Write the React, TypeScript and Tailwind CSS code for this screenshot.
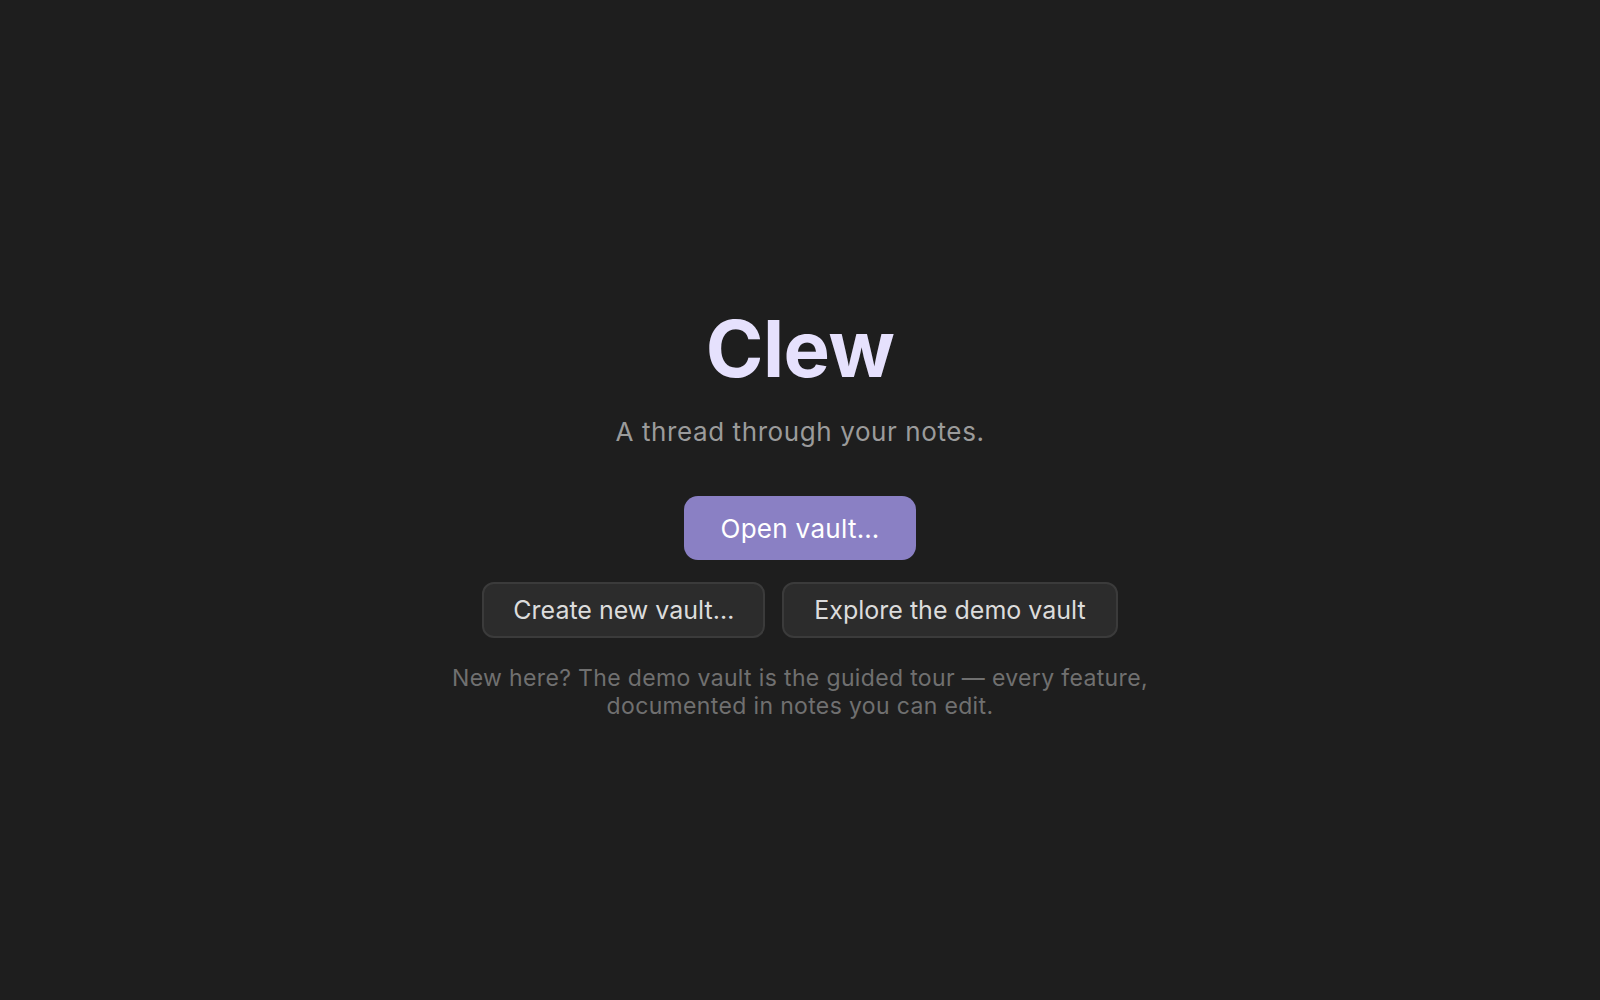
import React from 'react';

export default function App() {
  return (
    <div
      className="min-h-screen w-full bg-[#1e1e1e] flex flex-col items-center pt-[310px]"
      style={{ fontFamily: 'Inter, "Noto Sans", sans-serif' }}
    >
      {/* Title */}
      <h1 className="text-[78px] leading-none font-bold text-[#e6e1fd] tracking-[-0.5px]">Clew</h1>
      <p className="mt-[28px] text-[26px] leading-[32px] tracking-[0.6px] text-[#9b9b9b]">A thread through your notes.</p>

      {/* Actions */}
      <button className="mt-[48px] h-[64px] px-[36px] rounded-[14px] bg-[#8a80c4] text-white text-[26px] tracking-[0.3px]">
        Open vault…
      </button>
      <div className="mt-[22px] flex gap-[17px]">
        <button className="h-[56px] px-[29px] pt-[2px] rounded-[12px] bg-[#2c2c2c] border-2 border-[#3b3b3b] text-[#dcdcdc] text-[25px]">
          Create new vault…
        </button>
        <button className="h-[56px] px-[30px] pt-[2px] rounded-[12px] bg-[#2c2c2c] border-2 border-[#3b3b3b] text-[#dcdcdc] text-[25px]">
          Explore the demo vault
        </button>
      </div>

      <p className="mt-[26px] text-[23px] leading-[28px] tracking-[0.35px] text-[#707070] text-center">
        New here? The demo vault is the guided tour — every feature,
        <br />
        documented in notes you can edit.
      </p>
    </div>
  );
}
